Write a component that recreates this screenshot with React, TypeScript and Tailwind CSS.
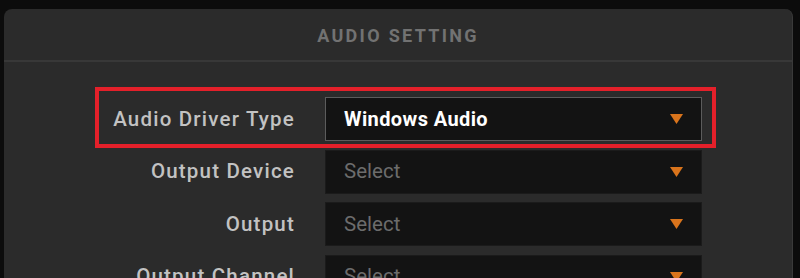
import React from 'react';

const rows = [
  { label: 'Audio Driver Type', value: 'Windows Audio', active: true },
  { label: 'Output Device', value: '', active: false },
  { label: 'Output', value: '', active: false },
  { label: 'Output Channel', value: '', active: false },
];

const Arrow: React.FC = () => (
  <svg width="13" height="10" viewBox="0 0 13 10" className="shrink-0">
    <polygon points="0,0 13,0 6.5,10" fill="#d9741c" />
  </svg>
);

const SelectRow: React.FC<{ label: string; value: string; active: boolean }> = ({ label, value, active }) => (
  <div className="relative flex items-center w-[603px] h-[44px]">
    {active && (
      <div className="absolute -left-[4px] -right-[14px] -top-[10px] -bottom-[7px] border-[4.5px] border-[#e4202a] pointer-events-none" />
    )}
    <div className="w-[197px] text-right pr-[1px] text-[20.5px] font-medium tracking-[1.2px] text-[#c2c2c2] whitespace-nowrap">{label}</div>
    <div
      className={`ml-[29px] w-[377px] h-full flex items-center justify-between pl-[18px] pr-[18px] bg-[#131313] ${
        active ? 'border-[1.5px] border-[#5c5c5c] my-[1px]' : 'border border-[#1b1b1b]'
      }`}
    >
      {value ? (
        <span className="text-[20px] font-bold tracking-[0.4px] text-white">{value}</span>
      ) : (
        <span className="text-[20.5px] text-[#6c6c6c]">Select</span>
      )}
      <Arrow />
    </div>
  </div>
);

export default function App() {
  return (
    <div className="w-[800px] h-[278px] overflow-hidden bg-[#0c0c0c] pt-[9px] pl-[4px] font-['Roboto',sans-serif]">
      <div className="w-[789px] h-[300px] bg-[#2b2b2b] rounded-t-[8px] border-r border-[#3a3a3a]">
        <div className="h-[53px] flex items-center justify-center border-b-2 border-[#383838]">
          <h2 className="text-[18px] font-bold tracking-[2.3px] text-[#727272] pt-[1px]">AUDIO SETTING</h2>
        </div>
        <div className="pl-[95px] pt-[35px] flex flex-col gap-[8.5px]">
          {rows.map(r => (
            <SelectRow key={r.label} {...r} />
          ))}
        </div>
      </div>
    </div>
  );
}
